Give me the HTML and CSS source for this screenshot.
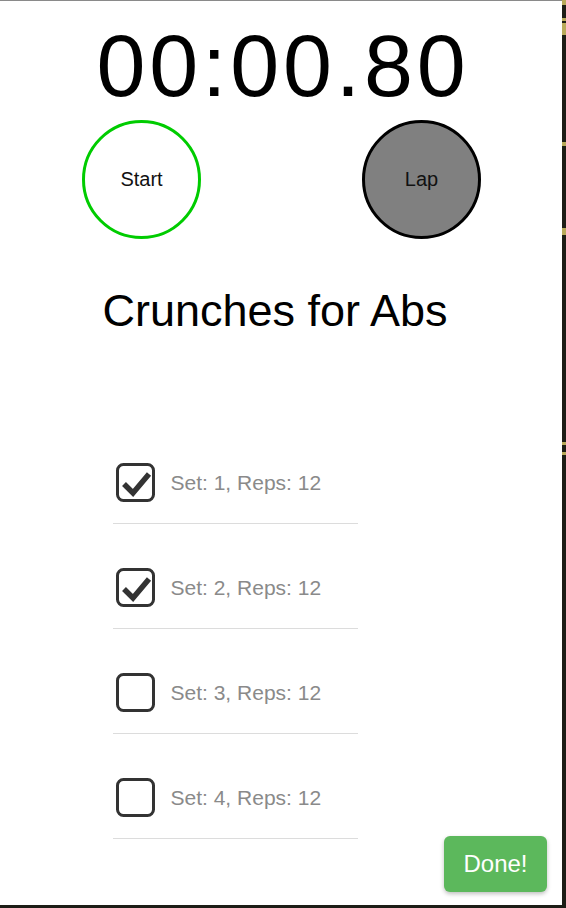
FILE: index.html
```html
<!DOCTYPE html>
<html>
<head>
<meta charset="utf-8">
<link rel="stylesheet" href="styles.css">
</head>
<body>
<div class="frame">
  <main class="screen">
    <div class="timer">00:00.80</div>
    <div class="controls">
      <button class="circle start">Start</button>
      <button class="circle lap">Lap</button>
    </div>
    <h1 class="title">Crunches for Abs</h1>
    <ul class="sets">
      <li class="set">
        <svg class="box" viewBox="0 0 39 39" width="39" height="39"><rect x="1.5" y="1.5" width="36" height="36" rx="6" fill="none" stroke="#333" stroke-width="3"/><path d="M8 21 L17 30 L33 11" fill="none" stroke="#333" stroke-width="5.5" stroke-linejoin="miter"/></svg>
        <span class="label">Set: 1, Reps: 12</span>
      </li>
      <li class="set">
        <svg class="box" viewBox="0 0 39 39" width="39" height="39"><rect x="1.5" y="1.5" width="36" height="36" rx="6" fill="none" stroke="#333" stroke-width="3"/><path d="M8 21 L17 30 L33 11" fill="none" stroke="#333" stroke-width="5.5" stroke-linejoin="miter"/></svg>
        <span class="label">Set: 2, Reps: 12</span>
      </li>
      <li class="set">
        <svg class="box" viewBox="0 0 39 39" width="39" height="39"><rect x="1.5" y="1.5" width="36" height="36" rx="6" fill="none" stroke="#333" stroke-width="3"/></svg>
        <span class="label">Set: 3, Reps: 12</span>
      </li>
      <li class="set">
        <svg class="box" viewBox="0 0 39 39" width="39" height="39"><rect x="1.5" y="1.5" width="36" height="36" rx="6" fill="none" stroke="#333" stroke-width="3"/></svg>
        <span class="label">Set: 4, Reps: 12</span>
      </li>
    </ul>
    <button class="done">Done!</button>
  </main>
  <div class="strip"></div>
</div>
<div class="bottom"></div>
</body>
</html>
```
FILE: styles.css
```css
* { box-sizing: border-box; }
html, body { margin: 0; padding: 0; background: #1d1d16; }
body {
  width: 566px;
  height: 908px;
  overflow: hidden;
  font-family: "Liberation Sans", Arial, sans-serif;
}
.frame {
  display: flex;
  height: 905px;
}
.screen {
  position: relative;
  width: 562px;
  height: 905px;
  background: #fff;
  border-top: 1px solid #8a8a8a;
  display: flex;
  flex-direction: column;
  align-items: center;
}
.strip {
  width: 4px;
  height: 905px;
  background:
    linear-gradient(to bottom,
      #b9aa5a 0, #b9aa5a 5px, #1d1d16 5px, #1d1d16 18px,
      #b9aa5a 18px, #b9aa5a 21px, #1d1d16 21px, #1d1d16 23px,
      #b9aa5a 23px, #b9aa5a 35px, #1d1d16 35px, #1d1d16 142px,
      #b9aa5a 142px, #b9aa5a 146px, #1d1d16 146px, #1d1d16 228px,
      #b9aa5a 228px, #b9aa5a 235px, #1d1d16 235px, #1d1d16 442px,
      #b9aa5a 442px, #b9aa5a 445px, #1d1d16 445px, #1d1d16 452px,
      #b9aa5a 452px, #b9aa5a 455px, #1d1d16 455px);
}
.bottom {
  height: 3px;
  background: #1d1d16;
}
.timer {
  margin-top: 21px;
  font-size: 88px;
  line-height: 88px;
  letter-spacing: 3.8px;
  color: #000;
  text-indent: 3.8px;
}
.controls {
  align-self: stretch;
  display: flex;
  justify-content: space-between;
  padding: 0 81px 0 82px;
  margin-top: 10px;
}
.circle {
  width: 119px;
  height: 119px;
  border-radius: 50%;
  font-family: "Liberation Sans", Arial, sans-serif;
  font-size: 20px;
  color: #111;
  padding: 0;
  cursor: pointer;
}
.start {
  background: #fff;
  border: 3px solid #00cc00;
}
.lap {
  background: #808080;
  border: 3px solid #000;
}
.title {
  margin: 46px 0 0 -12px;
  font-size: 45px;
  font-weight: normal;
  line-height: 52px;
  color: #000;
}
.sets {
  list-style: none;
  margin: 126px 0 0 -92px;
  padding: 0;
  width: 245px;
}
.set {
  display: flex;
  align-items: center;
  gap: 16px;
  padding: 44px 0 21px 3px;
  border-bottom: 1px solid #dcdcdc;
}
.set:first-child { padding-top: 0; }
.box { display: block; flex: none; }
.label {
  font-size: 21px;
  color: #8a8a8a;
}
.done {
  position: absolute;
  right: 15px;
  bottom: 13px;
  width: 103px;
  height: 56px;
  border: none;
  border-radius: 6px;
  background: #5cb85c;
  color: #fff;
  font-family: "Liberation Sans", Arial, sans-serif;
  font-size: 24px;
  box-shadow: 0 2px 4px rgba(0,0,0,0.25);
}
```
